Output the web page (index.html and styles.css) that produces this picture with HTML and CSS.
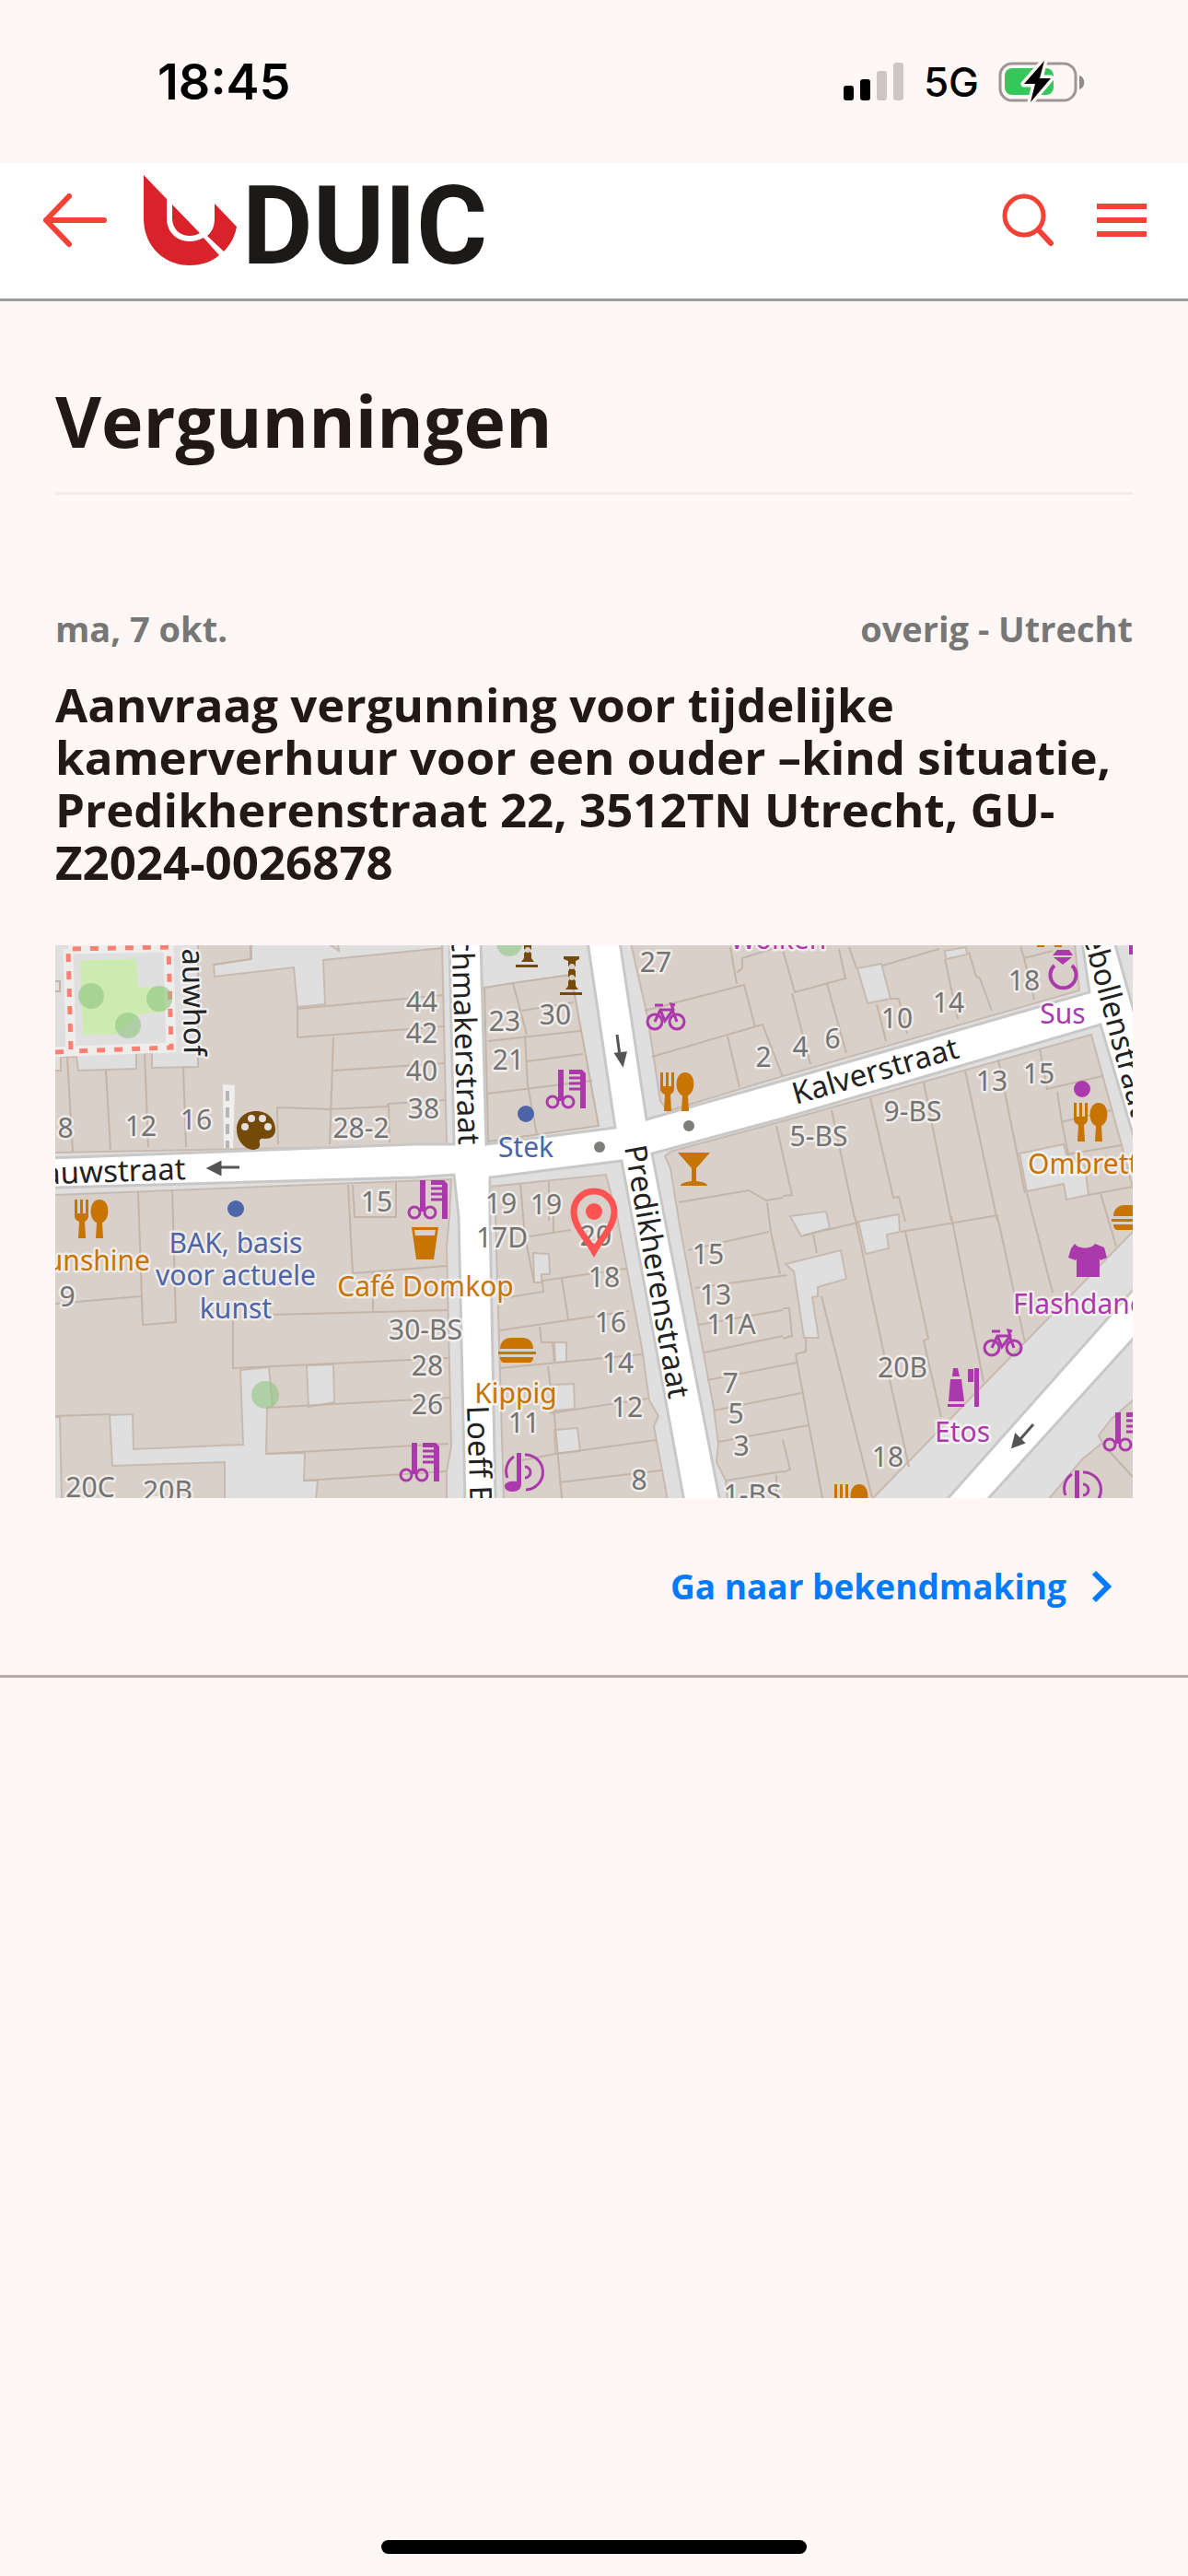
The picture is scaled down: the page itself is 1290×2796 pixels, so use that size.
FILE: index.html
```html
<!DOCTYPE html>
<html lang="nl">
    <head>
        <meta charset="UTF-8" />
        <meta name="viewport" content="width=device-width, initial-scale=1.0" />
        <title>Vergunningen - DUIC</title>
        <link rel="stylesheet" href="styles.css">
    </head>
    <body>
        <div class="statusbar">
            <span class="time">18:45</span>
            <div class="indicators">
                <svg class="signal" width="66" height="42" viewBox="0 0 66 42">
                    <rect x="0" y="25" width="11" height="16" rx="3" />
                    <rect x="18" y="18" width="11" height="23" rx="3" />
                    <rect x="36" y="9" width="11" height="32" rx="3" fill="#ccc6c4" />
                    <rect x="54" y="0" width="11" height="41" rx="3" fill="#ccc6c4" />
                </svg>
                <span class="network">5G</span>
                <svg class="battery" width="94" height="46" viewBox="0 0 94 46">
                    <rect x="2" y="3" width="82" height="40" rx="13" fill="none" stroke="#9c9796" stroke-width="3" />
                    <path d="M88 16c7 2 7 13 0 15z" fill="#8f8b89" />
                    <rect x="7" y="8" width="53" height="29" rx="8" fill="#34c759" />
                    <path d="M50 0 28 25h12l-5 20 22-26H45z" fill="#000" stroke="#fff7f5" stroke-width="7" stroke-linejoin="round" paint-order="stroke" />
                </svg>
            </div>
        </div>

        <header>
            <a class="back" href="#" aria-label="Terug">
                <svg width="70" height="58" viewBox="0 0 70 58">
                    <path d="M67 29H4M29 3 4 29l25 26" />
                </svg>
            </a>
            <a class="logo" href="#">
                <svg width="101" height="98" viewBox="0 0 101 98">
                    <path d="M0 0l25 26v21c0 15 11 25 25 25 6 0 11-2 15-4l17 19c-8 7-19 11-32 11C22 98 0 77 0 47z" />
                    <path d="M31 32l30 31c-3 2-7 3-11 3-11 0-19-8-19-19z" />
                    <path d="M77 31l24 25c-2 11-7 20-14 27L69 66c5-4 8-10 8-19z" />
                </svg>
                <span>DUIC</span>
            </a>
            <button class="icon-btn" aria-label="Zoeken">
                <svg width="58" height="58" viewBox="0 0 58 58">
                    <circle cx="24" cy="24" r="21" stroke-width="5" />
                    <path d="M40 40 53 54" stroke-width="6" />
                </svg>
            </button>
            <button class="icon-btn menu" aria-label="Menu">
                <svg width="54" height="36" viewBox="0 0 54 36">
                    <path d="M0 3h54M0 18h54M0 33h54" stroke-width="6" />
                </svg>
            </button>
        </header>

        <main>
            <h1>Vergunningen</h1>
            <article>
                <div class="meta">
                    <span>ma, 7 okt.</span>
                    <span>overig - Utrecht</span>
                </div>
                <h2>Aanvraag vergunning voor tijdelijke kamerverhuur voor een ouder –kind situatie, Predikherenstraat 22, 3512TN Utrecht, GU-Z2024-0026878</h2>

                <svg class="map" viewBox="0 0 1170 600" role="img" aria-label="Kaart">
                    <defs>
                        <g id="hair">
                            <path d="M12 0h6v34h-6zM36 42V5h-12V0h14l4 4v38z" />
                            <path d="M24 9h14M24 15h14M24 21h14" stroke="#ac39ac" stroke-width="3" />
                            <circle cx="6" cy="35" r="6" fill="none" stroke="#ac39ac" stroke-width="3" />
                            <circle cx="23" cy="35" r="6" fill="none" stroke="#ac39ac" stroke-width="3" />
                        </g>
                        <g id="food">
                            <path d="M0 0h3v15h3V0h3v15h3V0h3v18c0 3-2 5-4 6l1 18H4l1-18c-3-1-5-3-5-6z" />
                            <path d="M27 0c12 0 12 22 3 25l1 17h-8l1-17c-9-3-9-25 3-25z" />
                        </g>
                        <g id="bike" fill="none" stroke="#ac39ac" stroke-width="3">
                            <circle cx="9" cy="21" r="8" />
                            <circle cx="33" cy="21" r="8" />
                            <path d="M9 21 15 8h13l5 13M15 8l5 12 9-12-2-6 4 1M9 3h9" />
                        </g>
                        <g id="burger">
                            <path d="M2 12C2 4 8 0 14 0h12c7 0 12 4 12 12zM0 15h41v3H0zM2 21h36c0 4-2 6-5 6H7c-3 0-5-2-5-6z" />
                        </g>
                        <g id="music">
                            <path d="M13 0h5v34c0 5-4 8-9 8S0 40 0 36s6-6 13-5z" />
                            <path d="M22 2a19 19 0 0 1 1 38M10 4A19 19 0 0 0 3 27M22 15a6 6 0 0 1 0 12" fill="none" stroke="#ac39ac" stroke-width="3" />
                        </g>
                        <g id="statue">
                            <path d="M4 0h17v3l-4 2v5l-2 3 2 3v6l-2 2 2 3v5l3 4H6l3-4v-5l2-3-2-2v-6l2-3-2-3V5L4 3zM0 39h24v3H0z" />
                            <circle cx="13" cy="11" r="3" fill="#d9d0c9" />
                            <circle cx="13" cy="23" r="3" fill="#d9d0c9" />
                        </g>
                    </defs>

                    <rect width="1170" height="600" fill="#d9d0c9" />

                    <!-- stoepen en binnenplaatsen -->
                    <g class="paved">
                        <path d="M-2-2H155V132L105 133V117H88V134L25 136 23 121H6V136H-2z" />
                        <path d="M213-2V15L172 21 173 34 259 24 263 67 293 64 291 16 420 3V-2L307-2 308 6 296-2z" />
                        <path d="M420-2 425 217-2 225V271L430 254 428 294 425 327 430 544 425 571V602H487L478 294 472 262 598 249 610 294 637 437 645 494 655 511 650 522 665 602H730L728 581 718 561 720 541 715 502 678 304 668 242 662 229 668 224 790 191 1125 97 1158 217 1172 270V-2H1107L1112 49 790 142 665 180 657 169 643 77 625-2z" />
                        <path d="M1172 309 886 602H1078L1115 558 1137 540 1133 532 1147 514 1172 492z" />
                        <path d="M201 461 232 458 236 501 230 502 229 552 271 551 270 581 285 581 283 602H184V561L62 565 59 510 84 509 85 547 204 542z" />
                        <path d="M273 456 302 455 303 496 275 501zM-2 512H5L7 602H-2z" />
                        <path d="M519 334 536 335 537 357H528V366H520zM542 431H555V452L543 453zM540 477 563 476 564 503 543 505zM542 526 567 524 570 549 543 552z" />
                        <path d="M871 25 897 20 907 58 882 63zM966 6 989 2 990 10 967 15zM1047 226 1095 216 1098 227 1118 240 1122 271 1098 276 1095 259 1055 267z" />
                        <path d="M798 294 837 289 841 307 810 316zM872 300 916 292 917 311 903 314 905 329 880 335zM793 346 853 331 859 362 828 371V381L822 382 829 426H813L802 354z" />
                    </g>
                    <path class="block" d="M466 46 497 41 560 32 590 196 470 213z" />

                    <!-- perceelgrenzen -->
                    <path class="lots" d="M13 121 19 224M55 136 60 222M97 117 101 219M139 133 142 219M0 39H5V50H0M263 100 423 88M263 67V100M263 69 422 54M302 100 298 216M302 136 423 128M242 216 241 176 297 178 360 175 362 172 424 168M362 172 363 214M212 0V15L172 21" />
                    <path class="lots" d="M90 267 95 412 131 409 127 266M0 389 93 381M0 511 60 509M193 407V459L427 448M236 401 427 396M323 356 425 348M323 260 325 295H370V257M318 260 323 356M345 354V397M230 502 430 491M229 552 427 541M270 581 425 571" />
                    <path class="lots" d="M497 41 512 97M470 104 570 93M507 71 563 62M510 98 513 152 523 206M470 161 583 147M512 126 573 118M640 71 748 43 760 89M733 2 740 42M740 30 746 25V14L790 0M648 121 768 86 790 143M730 99 743 154" />
                    <path class="lots" d="M790 5 803 51 858 36 851 4M800 52 820 129M838 42 859 117M862 2 870 25M898 22 960 4M892 64 902 104M907 58H916L925 96M966 15 980 80M992 7 1000 34 1004 36 1017 71M1048 1 1052 14 1083 6M1052 14 1063 59" />
                    <path class="lots" d="M843 179 868 296M885 166 910 274 916 273 923 300M943 149 973 299M988 136 1023 299M1024 124 1053 269M1055 269 1083 377M1069 112 1077 156 1137 142M1088 159 1093 192 1100 227M1092 192 1147 179M1098 227 1158 217M1122 271 1170 262M1135 269 1152 327M783 196 800 271 790 272" />
                    <path class="lots" d="M823 314 827 334M812 315 872 301M832 381 887 599M868 294 900 444 927 566M923 311 948 427 943 429 962 512M918 311 1024 293M973 294 1008 474M1023 294 1053 431M815 427V441L804 444 833 600M790 394H797L800 424 790 427M790 537 798 569 790 572M1137 541 1170 577" />
                    <path class="lots" d="M677 279 753 266 772 277 790 274M773 279 777 311 787 357M687 331 775 311M695 372 795 358M698 412 790 396M705 442 790 424M708 472 805 453M715 505 810 486M720 539 818 521M728 581 790 571M783 575V600" />
                    <path class="lots" d="M515 316 560 309M541 294V311M510 316 520 366M480 384 530 376 529 364 620 351M550 362 557 406M483 418 623 397M526 414 528 431H540L542 454M483 459 637 444M535 457 542 511 550 600M537 508 643 492M543 552 653 537M507 559 543 552M547 583 658 570M505 259 510 316M536 256V299" />

                    <!-- hof met bomen -->
                    <path d="M27 16 88 15 90 45 118 46 120 72 90 75 65 97H30z" fill="#cdebb0" />
                    <path d="M14 4 123 2 126 111 17 115 0 116M17 115 14 4" fill="none" stroke="#efecec" stroke-width="11" />
                    <path d="M0 116 17 115 14 4 123 2 126 111 17 115" fill="none" stroke="#fa8072" stroke-width="5" stroke-dasharray="9 10" />
                    <g class="tree">
                        <circle cx="39" cy="55" r="14" /><circle cx="113" cy="58" r="14" />
                        <circle cx="79" cy="87" r="14" /><circle cx="228" cy="488" r="15" />
                        <circle cx="493" cy="-2" r="14" />
                    </g>
                    <path d="M182 151 195 152 193 220H183z" fill="#eeeeee" />
                    <path d="M187 158V220" stroke="#b5b5b5" stroke-width="4" stroke-dasharray="11 7" />

                    <!-- straten -->
                    <g class="road">
                        <path d="M-4 231 390 216H433L428-4H462L468 216 608 198 578-4H613L642 189 790 147 1123 51 1115-4H1150L1174 82V218L1135 86 790 188 648 226 722 604H683L615 234 472 252V294L478 604H445L438 294 433 249 390 252-4 263z" />
                        <path d="M1174 370 966 604H1010L1174 423z" />
                    </g>
                    <g class="arrow">
                        <path d="M200 241H175" /><path class="head" d="M167 242 179 236V248z" />
                        <path d="M610 97 613 120" /><path class="head" d="M616 129 609 118 619 117z" />
                        <path d="M1062 520 1048 536" /><path class="head" d="M1040 544 1043 532 1051 540z" />
                    </g>
                    <circle cx="591" cy="219" r="6" fill="#7d7d79" />
                    <circle cx="688" cy="196" r="6" fill="#7d7d79" />

                    <!-- huisnummers -->
                    <g class="num">
                        <text x="11" y="209">8</text><text x="93" y="207">12</text><text x="153" y="200">16</text>
                        <text x="332" y="209">28-2</text><text x="349" y="289">15</text>
                        <text x="398" y="72">44</text><text x="398" y="106">42</text><text x="398" y="147">40</text><text x="400" y="188">38</text>
                        <text x="488" y="93">23</text><text x="492" y="135">21</text><text x="543" y="86">30</text>
                        <text x="652" y="29">27</text><text x="769" y="132">2</text><text x="809" y="121">4</text><text x="844" y="112">6</text>
                        <text x="914" y="90">10</text><text x="970" y="73">14</text><text x="1052" y="49">18</text>
                        <text x="829" y="218">5-BS</text><text x="931" y="191">9-BS</text><text x="1017" y="158">13</text><text x="1068" y="150">15</text>
                        <text x="484" y="291">19</text><text x="533" y="292">19</text><text x="485" y="328">17D</text>
                        <text x="587" y="326">20</text><text x="596" y="371">18</text><text x="603" y="420">16</text><text x="611" y="464">14</text>
                        <text x="621" y="512">12</text><text x="509" y="529">11</text><text x="634" y="591">8</text>
                        <text x="13" y="392">9</text><text x="38" y="599">20C</text><text x="122" y="603">20B</text>
                        <text x="402" y="428">30-BS</text><text x="404" y="467">28</text><text x="404" y="509">26</text>
                        <text x="709" y="346">15</text><text x="717" y="390">13</text><text x="734" y="422">11A</text>
                        <text x="733" y="486">7</text><text x="739" y="519">5</text><text x="745" y="554">3</text><text x="757" y="607">1-BS</text>
                        <text x="920" y="469">20B</text><text x="904" y="566">18</text>
                    </g>

                    <!-- straatnamen -->
                    <g class="street">
                        <text transform="translate(142 254) rotate(-2)" text-anchor="end">auwstraat</text>
                        <text transform="translate(140 120) rotate(89)" text-anchor="end">auwhof</text>
                        <text transform="translate(438 217) rotate(88)" text-anchor="end">chmakerstraat</text>
                        <text transform="translate(447 500) rotate(88)">Loeff Be</text>
                        <text transform="translate(618 219) rotate(80)">Predikherenstraat</text>
                        <text transform="translate(804 173) rotate(-16)">Kalverstraat</text>
                        <text transform="translate(1116 -10) rotate(75)">ebollenstraat</text>
                    </g>

                    <!-- winkels en horeca -->
                    <g class="poi shop">
                        <use href="#hair" x="534" y="135" /><use href="#hair" x="384" y="255" />
                        <use href="#hair" x="375" y="540" /><use href="#hair" x="1139" y="507" />
                        <use href="#bike" x="642" y="62" /><use href="#bike" x="1008" y="416" />
                        <use href="#music" x="488" y="551" /><use href="#music" x="1094" y="570" />
                        <path d="M1107 324c4 6 18 6 22 0l10 4 3 11-7 3-1-2v20h-25v-20l-1 2-8-3 3-10z" />
                        <path d="M1088 5h13l4 6h-22zM1084 13h20l-10 8z" />
                        <path d="M1085 22a14 14 0 1 0 19 0" fill="none" stroke="#ac39ac" stroke-width="4" />
                        <path d="M975 459h5l2 9h-8zM972 471h12l3 24h-17zM969 498h18v3h-18zM998 459h5v42h-5zM991 460h6v14h-6z" />
                        <circle cx="1115" cy="156" r="9" /><path d="M1166 0h4v10h-4z" />
                        <text x="785" y="4">Wolken</text><text x="1094" y="85">Sus</text>
                        <text x="985" y="539">Etos</text><text class="start" x="1040" y="400">Flashdance</text>
                    </g>
                    <g class="poi eat">
                        <use href="#food" x="657" y="138" /><use href="#food" x="1106" y="171" />
                        <use href="#food" x="21" y="276" /><use href="#food" x="846" y="585" /><use href="#food" x="1062" y="-40" />
                        <use href="#burger" x="481" y="426" /><use href="#burger" x="1147" y="282" />
                        <path d="M676 225h35l-15 17v14c9 1 12 3 12 5h-29c0-2 3-4 12-5v-14z" />
                        <path d="M387 306h29l-5 35h-19zM390 309l1 6h21l1-6z" fill-rule="evenodd" />
                        <text x="402" y="381">Café Domkop</text><text x="500" y="497">Kippig</text>
                        <text class="end" x="103" y="353">Sunshine</text><text class="start" x="1056" y="248">Ombretta</text>
                    </g>
                    <g class="poi culture">
                        <circle cx="511" cy="183" r="9" /><circle cx="196" cy="286" r="9" />
                        <text x="511" y="230">Stek</text><text x="196" y="334">BAK, basis</text>
                        <text x="196" y="369">voor actuele</text><text x="196" y="405">kunst</text>
                    </g>
                    <g fill="#734a08">
                        <use href="#statue" x="548" y="12" /><use href="#statue" x="500" y="-18" />
                        <path d="M218 180c14 0 21 10 21 20 0 7-5 10-11 10-5-1-7 1-6 5 1 5-3 7-8 7-11-2-17-12-17-22 0-11 8-20 21-20z" />
                        <g fill="#e6e0dc">
                            <circle cx="206" cy="197" r="4" /><circle cx="213" cy="188" r="4" />
                            <circle cx="225" cy="188" r="4" /><circle cx="231" cy="197" r="4" />
                        </g>
                    </g>

                    <g class="pin">
                        <path d="M585 332c-8-14-22-27-22-43a22 22 0 0 1 44 0c0 16-14 29-22 43z" />
                        <circle cx="585" cy="289" r="9" />
                    </g>
                </svg>

                <a class="more" href="#">
                    Ga naar bekendmaking
                    <svg width="22" height="36" viewBox="0 0 22 36">
                        <path d="M3 3 18 18 3 33" />
                    </svg>
                </a>
            </article>
        </main>

        <div class="home-indicator"></div>
    </body>
</html>
```
FILE: styles.css
```css
* {
    box-sizing: border-box;
}
body {
    margin: 0;
    min-height: 100vh;
    display: flex;
    flex-direction: column;
    background: #fff7f5;
    color: #231815;
    font-family: "Open Sans", "Noto Sans", sans-serif;
}
a {
    text-decoration: none;
}
svg {
    display: block;
    flex-shrink: 0;
}

/* status bar */
.statusbar {
    height: 177px;
    padding: 0 112px 0 171px;
    display: flex;
    align-items: center;
    justify-content: space-between;
    color: #000;
    font-family: Inter, sans-serif;
}
.time {
    font-size: 54px;
    font-weight: 600;
}
.indicators {
    display: flex;
    align-items: center;
    gap: 21px;
}
.network {
    font-size: 44px;
    font-weight: 500;
}

/* header */
header {
    height: 150px;
    padding: 0 45px 24px 46px;
    display: flex;
    align-items: center;
    background: #fff;
    border-bottom: 3px solid #9b9b9b;
}
.back path {
    fill: none;
    stroke: #f44336;
    stroke-width: 6;
    stroke-linecap: round;
    stroke-linejoin: round;
}
.logo {
    display: flex;
    align-items: flex-end;
    gap: 6px;
    margin: 0 auto 0 40px;
    color: #1b1a18;
    font: 700 118px/84px Roboto, sans-serif;
}
.logo path {
    fill: #d9222a;
}
.icon-btn {
    padding: 0;
    border: 0;
    background: none;
    cursor: pointer;
}
.icon-btn svg {
    fill: none;
    stroke: #f44336;
    stroke-linecap: round;
}
.menu {
    margin-left: 45px;
}
.menu svg {
    stroke-linecap: butt;
}

/* content */
h1 {
    margin: 85px 60px 120px;
    padding-bottom: 32px;
    border-bottom: 3px solid #edeeec;
    font-size: 77px;
    line-height: 90px;
}
article {
    padding: 0 60px 71px;
    border-bottom: 3px solid #bca8a4;
}
.meta {
    display: flex;
    justify-content: space-between;
    color: #767776;
    font-size: 38px;
    font-weight: 700;
    line-height: 50px;
}
h2 {
    margin: 29px 0 62px;
    font-size: 51px;
    line-height: 57px;
}
.more {
    display: flex;
    align-items: center;
    justify-content: flex-end;
    gap: 27px;
    margin-top: 71px;
    padding-right: 23px;
    color: #007aff;
    font-size: 37px;
    font-weight: 700;
    line-height: 50px;
}
.more path {
    fill: none;
    stroke: #007aff;
    stroke-width: 6;
}

/* map */
.map {
    width: 100%;
    height: auto;
    overflow: hidden;
    font-family: "Noto Sans", sans-serif;
}
.map text {
    paint-order: stroke;
    stroke: rgba(255, 255, 255, 0.6);
    stroke-width: 5px;
    stroke-linejoin: round;
}
.paved {
    fill: #dfdfdf;
    stroke: #c8bab0;
    stroke-width: 2;
}
.block {
    fill: #d9d0c9;
    stroke: #c4b5a8;
    stroke-width: 2;
}
.lots {
    fill: none;
    stroke: #c4b5a8;
    stroke-width: 2;
}
.road {
    fill: #fff;
    stroke: #c9c8c6;
    stroke-width: 3;
}
.tree {
    fill: #8fc480;
    fill-opacity: 0.6;
}
.arrow {
    stroke: #555;
    stroke-width: 3;
}
.arrow .head {
    fill: #555;
}
.num {
    fill: #737373;
    font-size: 30px;
    text-anchor: middle;
}
.street {
    fill: #222;
    font-size: 33px;
}
.poi {
    font-size: 30px;
    text-anchor: middle;
}
.poi .start {
    text-anchor: start;
}
.poi .end {
    text-anchor: end;
}
.shop {
    fill: #ac39ac;
}
.eat {
    fill: #c77400;
}
.culture {
    fill: #4c64a8;
}
.pin path {
    fill: none;
    stroke: #ff5353;
    stroke-width: 7;
}
.pin circle {
    fill: #ff5353;
}

.home-indicator {
    width: 462px;
    height: 15px;
    margin: auto auto 24px;
    border-radius: 8px;
    background: #000;
}
```
